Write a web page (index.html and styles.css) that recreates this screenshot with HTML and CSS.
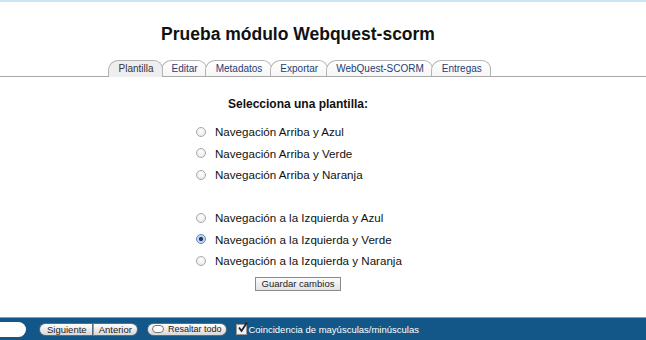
FILE: index.html
```html
<!DOCTYPE html>
<html lang="es">

<head>
    <meta charset="UTF-8">
    <title>Prueba módulo Webquest-scorm</title>
    <link rel="stylesheet" href="styles.css">
</head>

<body>
    <div class="top-strip"></div>

    <main class="page">
        <h1 class="title">Prueba módulo Webquest-scorm</h1>

        <nav class="tabs">
            <a class="tab selected">Plantilla</a>
            <a class="tab">Editar</a>
            <a class="tab">Metadatos</a>
            <a class="tab">Exportar</a>
            <a class="tab">WebQuest-SCORM</a>
            <a class="tab">Entregas</a>
        </nav>

        <form class="template-form">
            <h2 class="form-title">Selecciona una plantilla:</h2>
            <div class="options">
                <label class="option"><input type="radio" name="plantilla" class="radio">Navegación Arriba y Azul</label>
                <label class="option"><input type="radio" name="plantilla" class="radio">Navegación Arriba y Verde</label>
                <label class="option"><input type="radio" name="plantilla" class="radio">Navegación Arriba y Naranja</label>
                <div class="option-gap"></div>
                <label class="option"><input type="radio" name="plantilla" class="radio">Navegación a la Izquierda y Azul</label>
                <label class="option"><input type="radio" name="plantilla" class="radio" checked>Navegación a la Izquierda y Verde</label>
                <label class="option"><input type="radio" name="plantilla" class="radio">Navegación a la Izquierda y Naranja</label>
            </div>
            <div class="actions">
                <button type="button" class="save-button">Guardar cambios</button>
            </div>
        </form>
    </main>

    <div class="findbar">
        <div class="find-input"></div>
        <div class="find-buttons">
            <button class="pill first">Siguiente</button><button class="pill last">Anterior</button>
        </div>
        <button class="pill single"><span class="pill-icon"></span>Resaltar todo</button>
        <label class="match-case">
            <span class="checkbox">
                <svg width="11" height="11" viewBox="0 0 11 11"><path d="M2 5.5 L4.5 9 L10 0.5" fill="none" stroke="#1b2430" stroke-width="1.8"/></svg>
            </span>
            Coincidencia de mayúsculas/minúsculas
        </label>
    </div>
</body>

</html>
```

FILE: styles.css
```css
html,
body {
    margin: 0;
    height: 340px;
    overflow: hidden;
}

body {
    font-family: 'Liberation Sans', Arial, sans-serif;
    background-color: #fff;
    display: flex;
    flex-direction: column;
}

.top-strip {
    height: 2px;
    background-color: #cbe6f1;
}

.page {
    flex: 1;
    width: 596px;
}

.title {
    margin: 22px 0 0;
    font-size: 17.5px;
    line-height: 20px;
    font-weight: bold;
    text-align: center;
    color: #111;
}

.tabs {
    display: flex;
    margin-top: 16px;
    padding-left: 108px;
    width: 646px;
    box-sizing: border-box;
    border-bottom: 1px solid #a9a9a9;
}

.tab {
    height: 15px;
    line-height: 15px;
    padding: 0 8.5px 0 9.5px;
    margin-right: -2px;
    font-size: 10px;
    color: #1d3d78;
    background: linear-gradient(#ffffff, #f6f6f6);
    border: 1px solid #b3b3b3;
    border-bottom: none;
    border-radius: 10px 9px 0 0;
}

.tab.selected {
    color: #333;
    background: #eeeeee;
    margin-bottom: -1px;
    height: 16px;
    position: relative;
    z-index: 1;
}

.template-form {
    margin-top: 19px;
}

.form-title {
    margin: 0;
    font-size: 12px;
    line-height: 16px;
    font-weight: bold;
    text-align: center;
    color: #111;
}

.options {
    margin-top: 9px;
    padding-left: 196px;
}

.option {
    display: flex;
    align-items: center;
    height: 21.5px;
    font-size: 11.6px;
    color: #111;
}

.option-gap {
    height: 21.5px;
}

.radio {
    appearance: none;
    -webkit-appearance: none;
    width: 10px;
    height: 10px;
    margin: 0 9px 0 0;
    border-radius: 50%;
    border: 1px solid #a8a8a8;
    background: radial-gradient(circle at 50% 35%, #ffffff, #e4e4e4);
    box-sizing: border-box;
}

.radio:checked {
    border-color: #5f86b6;
    background: radial-gradient(circle, #1f3c6e 0, #1f3c6e 1.8px, #b9d0ee 2.4px, #e4eefb 100%);
}

.actions {
    display: flex;
    justify-content: center;
    margin-top: 5px;
}

.save-button {
    font-family: 'Liberation Sans', sans-serif;
    font-size: 9.5px;
    height: 14px;
    padding: 0 6px;
    color: #222;
    background: linear-gradient(#fbfbfb, #e3e3e3);
    border: 1px solid #8a8a8a;
    border-radius: 0;
    line-height: 12px;
}

.findbar {
    height: 22px;
    background-color: #135788;
    border-top: 1px solid #7f9fbd;
    display: flex;
    align-items: center;
    font-family: 'Liberation Sans', sans-serif;
    font-size: 9.5px;
}

.find-input {
    width: 36px;
    height: 15px;
    margin-left: -10px;
    background: #fff;
    border-radius: 8px;
}

.find-buttons {
    display: flex;
    margin-left: 13px;
}

.pill {
    font-family: inherit;
    font-size: 9.5px;
    height: 13px;
    line-height: 11px;
    padding: 0 5px;
    color: #222;
    background: linear-gradient(#ffffff, #d8d8d8);
    border: 1px solid #5b6e80;
    display: flex;
    align-items: center;
}

.pill.first {
    border-radius: 7px 0 0 7px;
    padding-left: 7px;
}

.pill.last {
    border-radius: 0 7px 7px 0;
    border-left: 1px solid #999;
}

.pill.single {
    margin-left: 9px;
    border-radius: 7px;
    padding: 0 5px 0 4px;
    font-size: 9px;
}

.pill-icon {
    width: 10px;
    height: 6px;
    border: 1px solid #777;
    border-radius: 4px;
    margin-right: 4px;
    background: #fff;
}

.match-case {
    display: flex;
    align-items: center;
    margin-left: 9px;
    color: #fff;
}

.checkbox {
    width: 9px;
    height: 9px;
    background: #f2f2f2;
    border: 1px solid #999;
    margin-right: 1px;
    position: relative;
}

.checkbox svg {
    position: absolute;
    left: 0;
    top: -3px;
}
```
